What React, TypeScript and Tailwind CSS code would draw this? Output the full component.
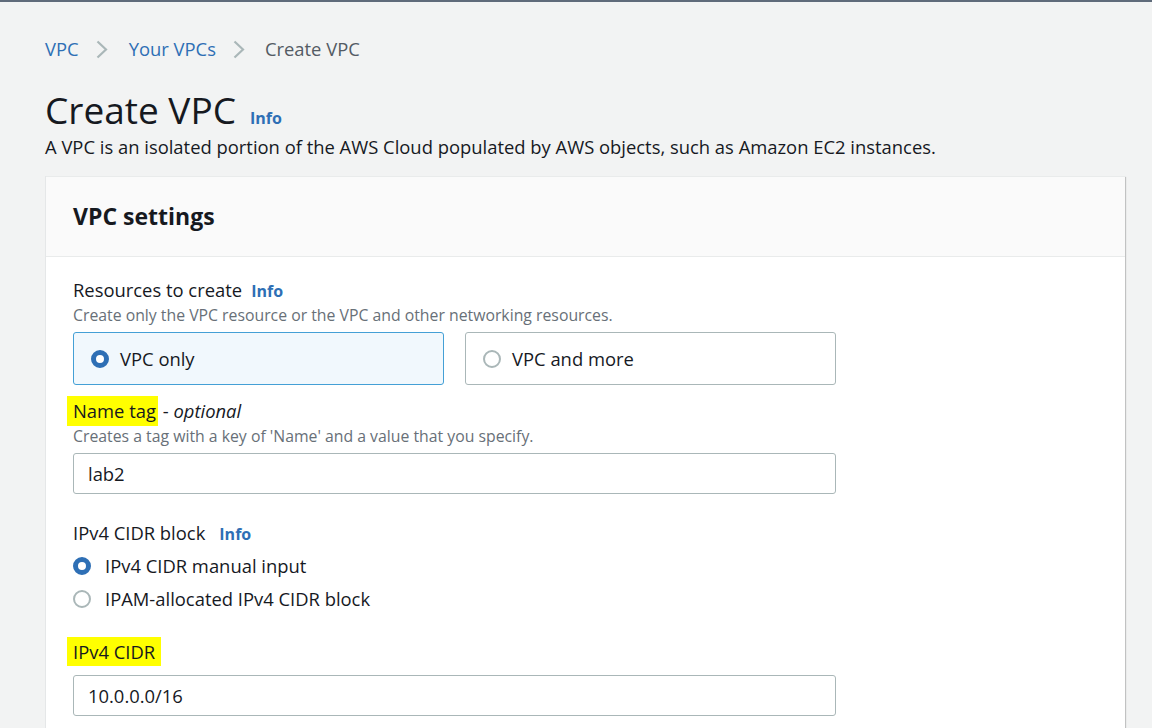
const font = { fontFamily: '"Open Sans", "Noto Sans", sans-serif' };

function Chevron() {
  return (
    <svg width="12" height="19" viewBox="0 0 12 19" className="shrink-0">
      <polyline points="1.5,1.5 10,9.5 1.5,17.5" fill="none" stroke="#aab7b8" strokeWidth="2.2" />
    </svg>
  );
}

function Radio({ checked }: { checked: boolean }) {
  return checked ? (
    <span className="w-[18px] h-[18px] rounded-full border-[5px] border-[#2e6fb5] bg-white shrink-0" />
  ) : (
    <span className="w-[18px] h-[18px] rounded-full border-2 border-[#aab7b8] bg-white shrink-0" />
  );
}

function Info({ className = 'ml-[14px]' }: { className?: string }) {
  return <span className={`text-[16px] font-bold text-[#2e6fb5] ${className}`}>Info</span>;
}

export default function App() {
  return (
    <div style={font} className="min-h-[728px] bg-[#f2f3f3] border-t-2 border-[#5f6b7a] text-[#16191f]">
      <div className="pl-[45px] pr-[27px]">
        {/* breadcrumbs */}
        <div className="flex items-center h-[26px] mt-[34px] text-[18.4px] leading-[26px]">
          <span className="text-[#2e6fb5]">VPC</span>
          <span className="ml-[17px] mr-[21px] flex"><Chevron /></span>
          <span className="text-[#2e6fb5]">Your VPCs</span>
          <span className="ml-[17px] mr-[20px] flex"><Chevron /></span>
          <span className="text-[#545b64]">Create VPC</span>
        </div>

        {/* title */}
        <div className="flex items-baseline mt-[25px]">
          <h1 className="text-[37px] leading-[46px]">Create VPC</h1>
          <Info />
        </div>
        <p className="text-[18.4px] leading-[26px] mt-[1px]">
          A VPC is an isolated portion of the AWS Cloud populated by AWS objects, such as Amazon EC2 instances.
        </p>

        {/* card */}
        <div className="mt-[16px] bg-white border-l border-[#e5e7e8] shadow-[1px_1px_1px_rgba(0,0,0,0.2)]">
          <div className="h-[81px] bg-[#fafafa] border-t border-[#e5e7e8] border-b border-[#e9ebeb] flex items-center px-[27px]">
            <h2 className="text-[23px] font-bold">VPC settings</h2>
          </div>

          <div className="px-[27px] pt-[20px] pb-[20px]">
            <div className="flex items-baseline text-[18.4px] leading-[26px]">
              Resources to create
              <Info className="ml-[9px]" />
            </div>
            <p className="text-[15.8px] text-[#687078] leading-[22px]">
              Create only the VPC resource or the VPC and other networking resources.
            </p>
            <div className="flex gap-[21px] mt-[6px]">
              <div className="w-[371px] h-[53px] rounded-[3px] border border-[#44a0d6] bg-[#f1f8fd] flex items-center gap-[11px] px-[17px] text-[18.4px]">
                <Radio checked />
                VPC only
              </div>
              <div className="w-[371px] h-[53px] rounded-[3px] border border-[#aab7b8] bg-white flex items-center gap-[11px] px-[17px] text-[18.4px]">
                <Radio checked={false} />
                VPC and more
              </div>
            </div>

            <div className="mt-[11px] text-[18.4px] leading-[30px] -ml-[6px]">
              <span className="bg-[#ffff00] pl-[6px] pr-[2px] inline-block">Name tag</span> - <span className="italic">optional</span>
            </div>
            <p className="text-[15.8px] text-[#687078] leading-[20px]">
              Creates a tag with a key of 'Name' and a value that you specify.
            </p>
            <div className="mt-[7px] w-[763px] h-[41px] border border-[#aab7b8] rounded-[3px] flex items-center px-[14px] text-[18.4px]">
              lab2
            </div>

            <div className="flex items-baseline text-[18.4px] leading-[26px] mt-[26px]">
              IPv4 CIDR block
              <Info />
            </div>
            <div className="flex flex-col gap-[7px] mt-[6px] text-[18.4px]">
              <label className="flex items-center gap-[14px] h-[26px]">
                <Radio checked />
                IPv4 CIDR manual input
              </label>
              <label className="flex items-center gap-[14px] h-[26px]">
                <Radio checked={false} />
                IPAM-allocated IPv4 CIDR block
              </label>
            </div>

            <div className="mt-[25px] text-[18.4px] leading-[29px] -ml-[6px]">
              <span className="bg-[#ffff00] pl-[6px] pr-[6px] inline-block">IPv4 CIDR</span>
            </div>
            <div className="mt-[9px] w-[763px] h-[41px] border border-[#aab7b8] rounded-[3px] flex items-center px-[14px] text-[18.4px]">
              10.0.0.0/16
            </div>
          </div>
        </div>
      </div>
    </div>
  );
}
